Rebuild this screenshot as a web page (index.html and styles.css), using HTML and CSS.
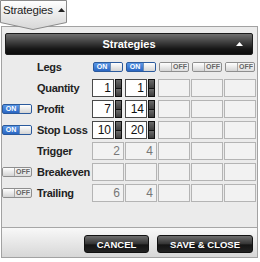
FILE: index.html
```html
<!DOCTYPE html>
<html lang="en">
<head>
    <meta charset="UTF-8">
    <title>Strategies</title>
    <link rel="stylesheet" href="styles.css">
</head>
<body>

    <!-- Tab on top -->
    <div class="tab">
        <svg class="tab-shape" width="67" height="31" viewBox="0 0 67 31">
            <defs>
                <linearGradient id="tabFill" x1="0" y1="0" x2="0" y2="1">
                    <stop offset="0" stop-color="#ffffff"/>
                    <stop offset="1" stop-color="#d6d6d6"/>
                </linearGradient>
            </defs>
            <polygon points="0.5,0.5 66.5,0.5 66.5,22.5 33,29.5 0.5,22.5" fill="url(#tabFill)" stroke="#8a8a8a"/>
        </svg>
        <span class="tab-label">Strategies<svg class="caret" width="7" height="4" viewBox="0 0 7 4"><polygon points="0,4 3.5,0 7,4" fill="#222"/></svg></span>
    </div>

    <div class="panel">
        <div class="panel-head">
            <span></span>
            <span class="head-title">Strategies</span>
            <svg class="head-caret" width="7" height="4" viewBox="0 0 7 4"><polygon points="0,4 3.5,0 7,4" fill="#fff"/></svg>
        </div>

        <div class="grid">
            <!-- Legs -->
            <div class="slot"></div>
            <div class="label">Legs</div>
            <div class="slot pad"><span class="toggle on"><span class="t-text">ON</span><span class="t-knob"></span></span></div>
            <div class="slot pad"><span class="toggle on"><span class="t-text">ON</span><span class="t-knob"></span></span></div>
            <div class="slot pad"><span class="toggle off"><span class="t-knob"></span><span class="t-text">OFF</span></span></div>
            <div class="slot pad"><span class="toggle off"><span class="t-knob"></span><span class="t-text">OFF</span></span></div>
            <div class="slot pad"><span class="toggle off"><span class="t-knob"></span><span class="t-text">OFF</span></span></div>

            <!-- Quantity -->
            <div class="slot"></div>
            <div class="label">Quantity</div>
            <div class="spin-cell"><span class="num-input">1</span><span class="spinner"><span></span><span></span></span></div>
            <div class="spin-cell"><span class="num-input">1</span><span class="spinner"><span></span><span></span></span></div>
            <div class="cell"></div>
            <div class="cell"></div>
            <div class="cell"></div>

            <!-- Profit -->
            <div class="slot"><span class="toggle on"><span class="t-text">ON</span><span class="t-knob"></span></span></div>
            <div class="label">Profit</div>
            <div class="spin-cell"><span class="num-input">7</span><span class="spinner"><span></span><span></span></span></div>
            <div class="spin-cell"><span class="num-input">14</span><span class="spinner"><span></span><span></span></span></div>
            <div class="cell"></div>
            <div class="cell"></div>
            <div class="cell"></div>

            <!-- Stop Loss -->
            <div class="slot"><span class="toggle on"><span class="t-text">ON</span><span class="t-knob"></span></span></div>
            <div class="label">Stop Loss</div>
            <div class="spin-cell"><span class="num-input">10</span><span class="spinner"><span></span><span></span></span></div>
            <div class="spin-cell"><span class="num-input">20</span><span class="spinner"><span></span><span></span></span></div>
            <div class="cell"></div>
            <div class="cell"></div>
            <div class="cell"></div>

            <!-- Trigger -->
            <div class="slot"></div>
            <div class="label">Trigger</div>
            <div class="cell">2</div>
            <div class="cell">4</div>
            <div class="cell"></div>
            <div class="cell"></div>
            <div class="cell"></div>

            <!-- Breakeven -->
            <div class="slot"><span class="toggle off"><span class="t-knob"></span><span class="t-text">OFF</span></span></div>
            <div class="label">Breakeven</div>
            <div class="cell"></div>
            <div class="cell"></div>
            <div class="cell"></div>
            <div class="cell"></div>
            <div class="cell"></div>

            <!-- Trailing -->
            <div class="slot"><span class="toggle off"><span class="t-knob"></span><span class="t-text">OFF</span></span></div>
            <div class="label">Trailing</div>
            <div class="cell">6</div>
            <div class="cell">4</div>
            <div class="cell"></div>
            <div class="cell"></div>
            <div class="cell"></div>
        </div>

        <div class="footer">
            <button class="btn btn-cancel">CANCEL</button>
            <button class="btn btn-save">SAVE &amp; CLOSE</button>
        </div>
    </div>

</body>
</html>
```

FILE: styles.css
```css
/* Page */
body {
    margin: 0;
    width: 260px;
    background-color: #fff;
    font-family: "Liberation Sans", Arial, sans-serif;
    color: #222;
}

/* Tab with the arrow point */
.tab {
    position: relative;
    z-index: 2;
    height: 26px;
}

.tab-shape {
    position: absolute;
    left: 0;
    top: 0;
}

.tab-label {
    position: relative;
    display: block;
    padding: 4px 0 0 3px;
    font-size: 11.5px;
    letter-spacing: -0.2px;
    color: #1e1e1e;
}

.caret {
    margin-left: 5px;
    vertical-align: 2px;
}

/* Panel */
.panel {
    margin-left: 1px;
    width: 257px;
    height: 232px;
    box-sizing: border-box;
    border: 1px solid #a2a2a2;
    background-color: #ebebeb;
    display: flex;
    flex-direction: column;
}

.panel-head {
    margin: 6px 4px 0 3px;
    height: 22px;
    box-sizing: border-box;
    border: 1px solid #1c1c1c;
    border-radius: 2px;
    background: linear-gradient(#707070, #3a3a3a 45%, #161616 75%, #0c0c0c);
    color: #fff;
    display: grid;
    grid-template-columns: 1fr auto 1fr;
    align-items: center;
}

.head-title {
    font-size: 11px;
    font-weight: bold;
}

.head-caret {
    justify-self: end;
    margin-right: 9px;
}

/* Rows */
.grid {
    display: grid;
    grid-template-columns: 30px 58px repeat(5, 32px);
    grid-auto-rows: 18px;
    gap: 3px 1px;
    margin-top: 3px;
}

.label {
    padding-left: 4px;
    font-size: 11px;
    font-weight: bold;
    letter-spacing: -0.3px;
    display: flex;
    align-items: center;
}

.slot {
    display: flex;
    align-items: center;
}

.slot.pad {
    padding-left: 1px;
}

.cell {
    box-sizing: border-box;
    border: 1px solid #b4b4b4;
    background-color: #f2f2f2;
    color: #777;
    font-size: 12px;
    line-height: 16px;
    text-align: right;
    padding-right: 3px;
}

/* Number input with spinner */
.spin-cell {
    display: flex;
    gap: 1px;
    padding-right: 2px;
}

.num-input {
    flex: 1;
    box-sizing: border-box;
    border: 1px solid #4a4a4a;
    background-color: #fff;
    color: #111;
    font-size: 12px;
    line-height: 16px;
    text-align: right;
    padding-right: 2px;
}

.spinner {
    width: 7px;
    box-sizing: border-box;
    background-color: #111;
    padding: 1px;
    display: flex;
    flex-direction: column;
    gap: 1px;
}

.spinner span {
    flex: 1;
    background: linear-gradient(#6a6a6a, #3c3c3c);
}

/* On / off switches */
.toggle {
    width: 30px;
    height: 10px;
    box-sizing: border-box;
    border: 1px solid #8e8e8e;
    border-radius: 2px;
    display: flex;
    overflow: hidden;
    font-size: 7px;
    font-weight: bold;
    line-height: 8px;
}

.toggle.on {
    border-color: #2b5a9c;
    background: linear-gradient(#5a97e6, #2a66c2);
}

.toggle.off {
    background: linear-gradient(#f6f6f6, #dedede);
}

.t-text {
    flex: 1;
    text-align: center;
}

.toggle.on .t-text {
    color: #fff;
}

.toggle.off .t-text {
    color: #666;
}

.t-knob {
    width: 11px;
    background: linear-gradient(#ffffff, #d4d4d4);
}

.toggle.on .t-knob {
    border-left: 1px solid #6f8fb8;
}

.toggle.off .t-knob {
    border-right: 1px solid #a8a8a8;
}

/* Footer buttons */
.footer {
    margin-top: auto;
    height: 30px;
    box-sizing: border-box;
    border-top: 1px solid #a6a6a6;
    background: linear-gradient(#f8f8f8, #d7d7d7);
    display: flex;
    justify-content: flex-end;
    gap: 8px;
    padding: 7px 4px 0 0;
}

.btn {
    height: 18px;
    padding: 0;
    border: 1px solid #111;
    border-radius: 3px;
    background: linear-gradient(#6e6e6e, #333 50%, #141414 55%, #222);
    color: #fff;
    font-family: "Liberation Sans", Arial, sans-serif;
    font-size: 9.5px;
    font-weight: bold;
}

.btn-cancel {
    width: 65px;
}

.btn-save {
    width: 96px;
}
```
